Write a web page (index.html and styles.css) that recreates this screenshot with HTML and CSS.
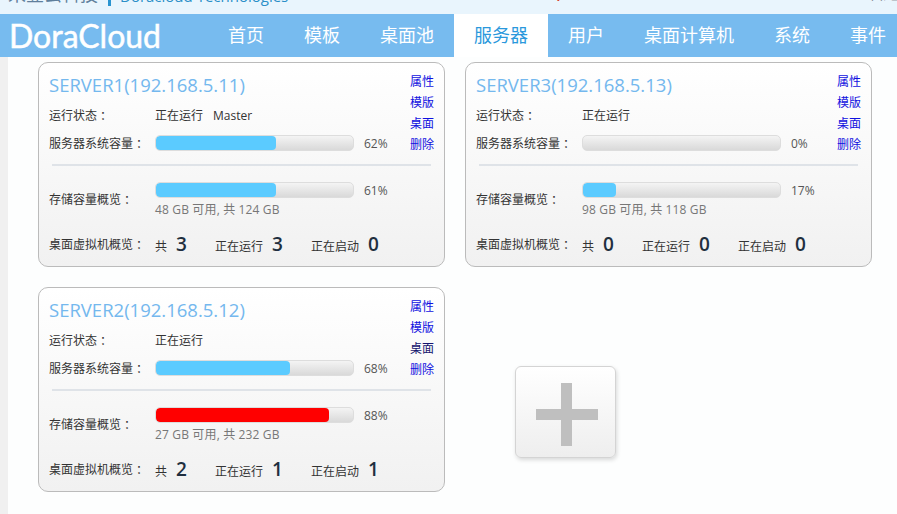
FILE: index.html
```html
<!DOCTYPE html>
<html lang="zh-CN">
<head>
<meta charset="utf-8">
<title>DoraCloud</title>
<link rel="stylesheet" href="styles.css">
</head>
<body>
<div class="topbar">
  <div class="topbar-inner">
    <span class="brand-cn">来登云科技</span>
    <span class="brand-sep"></span>
    <span class="brand-en">Doracloud Technologies</span>
    <span class="brand-mid">.</span>
    <span class="brand-user">欢迎您</span>
  </div>
</div>
<nav class="nav">
  <div class="logo">DoraCloud</div>
  <a class="nav-item">首页</a>
  <a class="nav-item">模板</a>
  <a class="nav-item">桌面池</a>
  <a class="nav-item active">服务器</a>
  <a class="nav-item">用户</a>
  <a class="nav-item">桌面计算机</a>
  <a class="nav-item">系统</a>
  <a class="nav-item">事件</a>
</nav>
<main class="main">
  <section class="card">
    <div class="card-top">
      <div class="card-info">
        <h2 class="title">SERVER1(192.168.5.11)</h2>
        <div class="row status"><span class="label">运行状态<span class="colon">：</span></span><span>正在运行</span><span class="role">Master</span></div>
        <div class="row"><span class="label">服务器系统容量<span class="colon">：</span></span><div class="track"><div class="fill" style="width:61%"></div></div><span class="pct">62%</span></div>
      </div>
      <div class="actions"><a class="link">属性</a><a class="link">模版</a><a class="link">桌面</a><a class="link">删除</a></div>
    </div>
    <hr class="rule">
    <div class="storage">
      <span class="label">存储容量概览<span class="colon">：</span></span>
      <div class="storage-body">
        <div class="row"><div class="track"><div class="fill" style="width:61%"></div></div><span class="pct">61%</span></div>
        <div class="sub">48 GB 可用, 共 124 GB</div>
      </div>
    </div>
    <div class="vm">
      <span class="label">桌面虚拟机概览<span class="colon">：</span></span>
      <span class="vm-total">共<b class="count">3</b></span>
      <span class="vm-run">正在运行<b class="count">3</b></span>
      <span class="vm-start">正在启动<b class="count">0</b></span>
    </div>
  </section>

  <section class="card">
    <div class="card-top">
      <div class="card-info">
        <h2 class="title">SERVER3(192.168.5.13)</h2>
        <div class="row status"><span class="label">运行状态<span class="colon">：</span></span><span>正在运行</span></div>
        <div class="row"><span class="label">服务器系统容量<span class="colon">：</span></span><div class="track"></div><span class="pct">0%</span></div>
      </div>
      <div class="actions"><a class="link">属性</a><a class="link">模版</a><a class="link">桌面</a><a class="link">删除</a></div>
    </div>
    <hr class="rule">
    <div class="storage">
      <span class="label">存储容量概览<span class="colon">：</span></span>
      <div class="storage-body">
        <div class="row"><div class="track"><div class="fill" style="width:17%"></div></div><span class="pct">17%</span></div>
        <div class="sub">98 GB 可用, 共 118 GB</div>
      </div>
    </div>
    <div class="vm">
      <span class="label">桌面虚拟机概览<span class="colon">：</span></span>
      <span class="vm-total">共<b class="count">0</b></span>
      <span class="vm-run">正在运行<b class="count">0</b></span>
      <span class="vm-start">正在启动<b class="count">0</b></span>
    </div>
  </section>

  <section class="card">
    <div class="card-top">
      <div class="card-info">
        <h2 class="title">SERVER2(192.168.5.12)</h2>
        <div class="row status"><span class="label">运行状态<span class="colon">：</span></span><span>正在运行</span></div>
        <div class="row"><span class="label">服务器系统容量<span class="colon">：</span></span><div class="track"><div class="fill" style="width:68%"></div></div><span class="pct">68%</span></div>
      </div>
      <div class="actions"><a class="link">属性</a><a class="link">模版</a><a class="link visited">桌面</a><a class="link">删除</a></div>
    </div>
    <hr class="rule">
    <div class="storage">
      <span class="label">存储容量概览<span class="colon">：</span></span>
      <div class="storage-body">
        <div class="row"><div class="track"><div class="fill danger" style="width:88%"></div></div><span class="pct">88%</span></div>
        <div class="sub">27 GB 可用, 共 232 GB</div>
      </div>
    </div>
    <div class="vm">
      <span class="label">桌面虚拟机概览<span class="colon">：</span></span>
      <span class="vm-total">共<b class="count">2</b></span>
      <span class="vm-run">正在运行<b class="count">1</b></span>
      <span class="vm-start">正在启动<b class="count">1</b></span>
    </div>
  </section>

  <div class="add-cell">
    <button class="add" type="button" aria-label="add">
      <svg class="add-icon" viewBox="0 0 62 63" width="62" height="63"><path d="M25 0h11v26h26v11H36v26H25V37H0V26h25z" fill="#bfbfbf"/></svg>
    </button>
  </div>
</main>
</body>
</html>
```
FILE: styles.css
```css
* { box-sizing: border-box; }
html, body { margin: 0; height: 100%; }
body {
  width: 897px;
  height: 514px;
  overflow: hidden;
  background: #fdfefe;
  font-family: "Open Sans", "Noto Sans CJK SC", sans-serif;
  font-size: 12px;
  color: #333;
}
.topbar { height: 14px; background: #e9f5fd; overflow: hidden; }
.topbar-inner {
  display: flex;
  align-items: center;
  height: 24px;
  margin-top: -18px;
  padding-left: 8px;
  font-size: 18px;
  line-height: 24px;
}
.brand-cn { flex: none; width: 100px; color: #5f7f9c; white-space: nowrap; }
.brand-sep { flex: none; width: 3px; height: 24px; background: #2a94d0; }
.brand-en { flex: none; margin: 3px 0 0 9px; width: 436px; font-size: 15px; color: #2a8fc8; white-space: nowrap; }
.brand-mid { flex: none; color: #d83a1a; width: 309px; }
.brand-user { flex: none; margin-bottom: 4px; color: #333; white-space: nowrap; }
.nav { display: flex; height: 43px; background: #77bbef; color: #fff; font-size: 18px; overflow: hidden; }
.logo {
  flex: none;
  width: 208px;
  padding: 3px 0 0 9px;
  font-family: "Lato", sans-serif;
  font-size: 32px;
  line-height: 38px;
  color: #fff;
  -webkit-text-stroke: .5px #fff;
}
.nav-item { flex: none; padding: 0 20px; line-height: 43px; white-space: nowrap; }
.nav-item.active { background: #fff; color: #2a98dc; }
.main {
  display: grid;
  grid-template-columns: 407px 407px;
  grid-auto-rows: 205px;
  column-gap: 20px;
  row-gap: 20px;
  height: 457px;
  padding: 5px 0 0 30px;
  border-left: 8px solid #f0f0f0;
  background: #fdfefe;
}
.card {
  display: flex;
  flex-direction: column;
  padding: 0 10px;
  border: 1px solid #bbb;
  border-radius: 10px;
  background: linear-gradient(#fff, #f1f1f1);
}
.card-top { display: flex; justify-content: space-between; height: 93px; }
.card-info { flex: 1; }
.title {
  margin: 9px 0 0;
  font-size: 18.5px;
  font-weight: 400;
  line-height: 25px;
  color: #74b8ee;
  white-space: nowrap;
}
.row { display: flex; align-items: center; height: 16px; white-space: nowrap; }
.row.status { margin-top: 9px; margin-bottom: 11px; height: 18px; }
.label { display: inline-block; width: 106px; color: #333; flex: none; }
.storage .label { margin-bottom: 3px; }
.colon { padding-left: 3px; font-family: "Noto Sans CJK TC", sans-serif; }
.role { margin-left: 10px; }
.track {
  width: 199px;
  height: 16px;
  border: 1px solid #ddd;
  border-radius: 5px;
  background: linear-gradient(#f4f4f4, #d9d9d9);
  overflow: hidden;
  flex: none;
}
.fill { height: 100%; border-radius: 4px; background: #5bcbff; }
.fill.danger { background: #ff0000; }
.pct { margin-left: 10px; color: #555; }
.actions { display: flex; flex-direction: column; margin-top: 8px; }
.link { display: block; line-height: 21px; color: #1010e0; }
.link.visited { color: #14146e; }
.rule { flex: none; height: 2px; margin: 8px 3px 0; border: 0; background: #dfe3e8; }
.storage { display: flex; align-items: center; margin-top: 16px; }
.storage-body { display: flex; flex-direction: column; }
.sub { margin-top: 3px; line-height: 17px; letter-spacing: .15px; color: #777; }
.vm { display: flex; align-items: center; height: 24px; margin-top: 14px; white-space: nowrap; }
.vm-total { width: 60px; }
.vm-run { width: 96px; }
.count { margin-left: 9px; font-size: 19px; font-weight: 600; color: #1f2f3f; }
.add-cell { padding: 79px 0 0 50px; }
.add {
  display: flex;
  align-items: center;
  justify-content: center;
  width: 101px;
  height: 92px;
  padding: 5px 0 0 3px;
  border: 1px solid #d4d4d4;
  border-radius: 6px;
  background: linear-gradient(#fff, #eee);
  box-shadow: 1px 2px 4px rgba(0, 0, 0, .15);
}
.add-icon { display: block; }
```
